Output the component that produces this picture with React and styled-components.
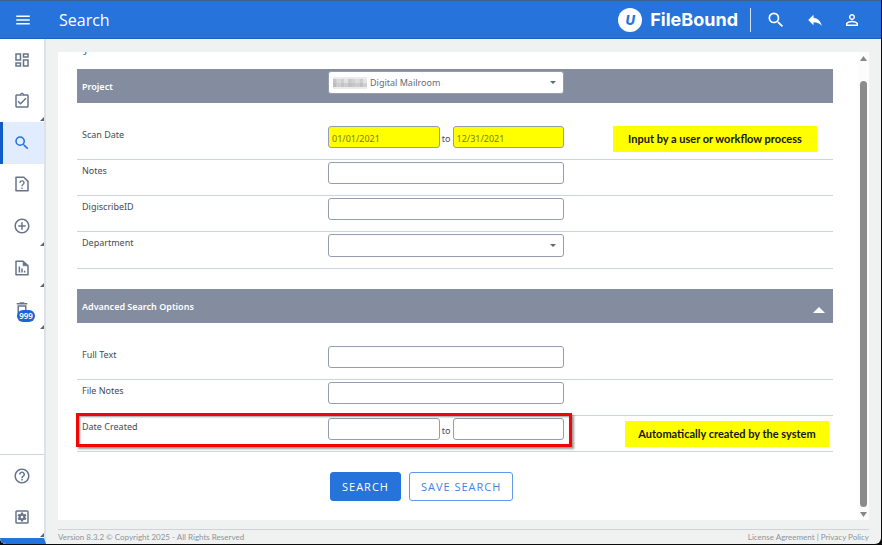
import React from 'react';
import styled, { createGlobalStyle } from 'styled-components';
import {
  MdMenu,
  MdSearch,
  MdReply,
  MdOutlineDashboard,
  MdOutlineAssignmentTurnedIn,
  MdAddCircleOutline,
  MdDeleteOutline,
  MdHelpOutline,
  MdOutlineSettingsApplications,
  MdPersonOutline,
} from 'react-icons/md';

const GlobalStyle = createGlobalStyle`
  * {
    box-sizing: border-box;
  }
  body {
    margin: 0;
    background: #0b0b0b;
    font-family: 'Noto Sans', 'Open Sans', sans-serif;
    font-size: 9px;
    color: #454b54;
  }
  button, input, select {
    font-family: inherit;
  }
`

const Window = styled.div`
  display: flex;
  flex-direction: column;
  min-height: calc(100vh - 1px);
  margin: 0 1px 1px 0;
  background: #f0f2f1;
  border-radius: 0 0 6px 6px;
  overflow: hidden;
`

const TopBar = styled.header`
  display: flex;
  align-items: center;
  height: 39px;
  padding: 0 20px 0 14px;
  color: #fff;
  background: #2573db;
  border-top: 1px solid #3b618f;
  border-bottom: 1px solid #1b61c2;
`

const BarButton = styled.button`
  display: flex;
  padding: 0;
  border: 0;
  background: none;
  color: inherit;
  font-size: ${p => p.$size || 18}px;
  margin-left: ${p => p.$gap || 0}px;
`

const Title = styled.h1`
  margin: 0 auto 0 27px;
  font-family: 'Open Sans', sans-serif;
  font-size: 16px;
  font-weight: 400;
`

const Brand = styled.div`
  display: flex;
  align-items: center;
  gap: 8px;
  padding-right: 12px;
  border-right: 1px solid #d5e3f8;
  font: 700 18px/24px Inter, sans-serif;
`

const BrandMark = styled.span`
  display: flex;
  align-items: center;
  justify-content: center;
  width: 24px;
  height: 24px;
  border-radius: 50%;
  background: #fff;
  color: #2573db;
  font: italic 800 13px/20px Inter, sans-serif;
`

const Body = styled.div`
  display: flex;
  flex: 1;
`

const Sidebar = styled.nav`
  display: flex;
  flex-direction: column;
  justify-content: space-between;
  width: 46px;
  background: #fff;
  border-right: 2px solid #dde1e8;
  border-bottom: 6px solid #2573db;
`

const NavGroup = styled.div`
  display: grid;
  grid-auto-rows: 1fr;
  min-height: ${p => p.$height}px;
  border-top: ${p => (p.$ruled ? '1px solid #cdd3dc' : '0')};
`

const NavButton = styled.button`
  position: relative;
  display: flex;
  align-items: center;
  justify-content: center;
  padding: 0;
  border: 0;
  border-left: 3px solid ${p => (p.$active ? '#0f5cc8' : 'transparent')};
  padding-right: 3px;
  background: ${p => (p.$active ? '#e1edfe' : 'none')};
  color: ${p => (p.$active ? '#2573db' : '#66748a')};
  font-size: 18px;
`

const Corner = styled.span`
  position: absolute;
  right: 0;
  bottom: 1px;
  border-style: solid;
  border-width: 0 0 4px 4px;
  border-color: transparent transparent #5c6370 transparent;
`

const Badge = styled.span`
  position: absolute;
  left: 14px;
  top: 22px;
  min-width: 18px;
  padding: 0 2px;
  border-radius: 6px;
  background: #1966d6;
  color: #fff;
  font-size: 8px;
  font-weight: 600;
  line-height: 12px;
`

const Main = styled.main`
  display: flex;
  flex: 1;
  flex-direction: column;
  padding: 13px 12px 0;
`

const Panel = styled.section`
  display: flex;
  flex: 1;
  background: #fff;
`

const Form = styled.form`
  flex: 1;
  padding: 0 25px 19px 19px;
`

const ClippedHeading = styled.div`
  height: 3px;
  margin-bottom: 14px;
  padding-left: 7px;
  overflow: hidden;
  display: flex;
  align-items: flex-end;
  color: #2573db;
  font: 13px/15px 'Open Sans', sans-serif;
`

const SectionHead = styled.div`
  display: grid;
  grid-template-columns: 251px 236px 1fr;
  height: 34px;
  align-items: center;
  background: #838d9f;
  color: #fff;
`

const SectionTitle = styled.label`
  padding-left: 5px;
  font-weight: 600;
`

const Collapse = styled.button`
  justify-self: end;
  align-self: end;
  display: flex;
  margin: 0 8px 10px 0;
  padding: 0;
  border: 0;
  background: none;
  color: #fff;
`

const Fields = styled.div`
  padding: 21px 0 20px;
`

const Row = styled.div`
  position: relative;
  display: grid;
  grid-template-columns: 251px 236px 1fr;
  align-items: start;
  min-height: ${p => (p.$tall ? 37 : 36)}px;
  padding-top: 2px;
  border-bottom: 1px solid #cfd4da;
`

const Label = styled.label`
  padding: 1px 0 0 5px;
  line-height: 16px;
`

const Input = styled.input`
  width: 100%;
  height: 22px;
  min-width: 0;
  padding: 3px 3px 0;
  border: 1px solid #949eae;
  border-radius: 3px;
  background: ${p => (p.$marked ? '#ffff00' : '#fff')};
  color: ${p => (p.$marked ? '#7d7c10' : '#555')};
  font-size: 9px;
`

const Range = styled.div`
  display: grid;
  grid-template-columns: 1fr 13px 1fr;
  align-items: center;
  text-align: center;

  span {
    padding-top: 3px;
  }
`

const SelectBox = styled.div`
  position: relative;
  align-self: start;
  margin-top: ${p => p.$top || 0}px;
  color: #5a6880;

  select {
    appearance: none;
    width: 100%;
    height: 23px;
    padding: 0 20px 0 ${p => p.$indent || 4}px;
    border: 1px solid #949eae;
    border-radius: 3px;
    background: #fff;
    color: #666b73;
    font-size: 9px;
  }
  .caret {
    position: absolute;
    right: 8px;
    top: 10px;
  }
  .redacted {
    position: absolute;
    left: 5px;
    top: 6px;
  }
`

const Note = styled.div`
  justify-self: end;
  min-width: 204px;
  margin: ${p => (p.$raised ? '0 16px 0 0' : '3px 4px 0 0')};
  background: #ffff00;
  color: #16160a;
  font: 700 11px/26px Lato, sans-serif;
  text-align: center;
`

const Highlight = styled.div`
  position: absolute;
  grid-column: 1 / 3;
  inset: -3px -8px 4px -1px;
  border: 3px solid #f20505;
  box-shadow: 2px 2px 2px rgba(0, 0, 0, 0.4), inset 1px 1px 2px rgba(0, 0, 0, 0.4);
  pointer-events: none;
`

const Actions = styled.div`
  display: flex;
  gap: 8px;
  padding-left: 253px;
`

const Action = styled.button`
  height: 29px;
  padding: 0 11px;
  border: 1px solid ${p => (p.$primary ? '#2573db' : '#5f9aea')};
  border-radius: 3px;
  background: ${p => (p.$primary ? '#2573db' : '#fff')};
  color: ${p => (p.$primary ? '#fff' : '#3f84e2')};
  font: 500 11px/16px 'Open Sans', sans-serif;
  letter-spacing: 1px;
`

const Scrollbar = styled.div`
  display: flex;
  flex-direction: column;
  align-items: center;
  gap: 20px;
  width: 11px;
  padding: 4px 0 3px;
  background: #fcfcfc;
  color: #878787;
`

const Thumb = styled.div`
  flex: 1;
  width: 7px;
  margin-bottom: -15px;
  border-radius: 4px;
  background: #8b8b8b;
`

const Footer = styled.footer`
  display: flex;
  justify-content: space-between;
  margin-top: 9px;
  border-top: 1px solid #cfd2d4;
  color: #8d949b;
  font: 8px/14px Lato, sans-serif;

  a {
    color: inherit;
    text-decoration: none;
  }
`

const Triangle = ({ w, h, down, className }) => (
  <svg className={className} width={w} height={h} viewBox="0 0 10 10" preserveAspectRatio="none" fill="currentColor">
    <path d={down ? 'M0 0h10L5 10z' : 'M5 0l5 10H0z'} />
  </svg>
)

const FileQuestionIcon = () => (
  <svg width="18" height="18" viewBox="0 0 24 24" fill="none" stroke="currentColor" strokeWidth="2">
    <path d="M4 3h10.500L20 8.500V21H4z" strokeLinejoin="round" />
    <path d="M9.300 10.500c0-3.800 5.400-3.500 5.400-.2 0 2.100-2.700 2.100-2.700 4.700M12 16.500v2" strokeWidth="1.700" />
  </svg>
)

const FileChartIcon = () => (
  <svg width="18" height="18" viewBox="0 0 24 24" fill="none" stroke="currentColor" strokeWidth="2">
    <path d="M4 3h9.500L20 9v12H4z" strokeLinejoin="round" />
    <path d="M13.500 3v6H20z" fill="currentColor" strokeWidth="1" />
    <path d="M8.500 10v8M12 12.500V18M15.500 15.500V18" />
  </svg>
)

// blurred out company name in front of the project
const shades = [
  '#c4c4c4', '#d9d9d9', '#cfcfcf', '#e2e2e2', '#c9c9c9', '#d2d2d2', '#dddddd', '#cccccc', '#e4e4e4',
  '#bdbdbd', '#cdcdcd', '#c2c2c2', '#cacaca', '#bfbfbf', '#c6c6c6', '#cbcbcb', '#c0c0c0', '#cfcfcf',
]

const Redacted = () => (
  <svg className="redacted" width="34" height="12" viewBox="0 0 36 12" preserveAspectRatio="none">
    <rect width="36" height="12" fill="#ececec" />
    {shades.map((fill, i) => (
      <rect key={i} x={(i % 9) * 4} y={i < 9 ? 2 : 6} width="4" height="4" fill={fill} />
    ))}
  </svg>
)

const navItems = [
  { name: 'Dashboard', icon: <MdOutlineDashboard /> },
  { name: 'Assignments', icon: <MdOutlineAssignmentTurnedIn />, corner: true },
  { name: 'Search', icon: <MdSearch />, active: true },
  { name: 'Requests', icon: <FileQuestionIcon /> },
  { name: 'Add', icon: <MdAddCircleOutline />, corner: true },
  { name: 'Reports', icon: <FileChartIcon />, corner: true },
  { name: 'Deleted', icon: <MdDeleteOutline />, corner: true, badge: '999' },
]

const helpItems = [
  { name: 'Help', icon: <MdHelpOutline /> },
  { name: 'Settings', icon: <MdOutlineSettingsApplications />, corner: true },
]

const NavItem = ({ item }) => (
  <NavButton type="button" aria-label={item.name} $active={item.active}>
    {item.icon}
    {item.badge && <Badge>{item.badge}</Badge>}
    {item.corner && <Corner />}
  </NavButton>
)

const TextRow = ({ id, label }) => (
  <Row>
    <Label htmlFor={id}>{label}</Label>
    <Input id={id} type="text" />
  </Row>
)

const DateRow = ({ id, label, from, to, marked, children }) => (
  <Row>
    <Label htmlFor={id}>{label}</Label>
    <Range>
      <Input id={id} type="text" defaultValue={from} $marked={marked} />
      <span>to</span>
      <Input type="text" aria-label={`${label} end`} defaultValue={to} $marked={marked} />
    </Range>
    {children}
  </Row>
)

export default function App() {
  return (
    <Window>
      <GlobalStyle />
      <TopBar>
        <BarButton type="button" aria-label="Menu"><MdMenu /></BarButton>
        <Title>Search</Title>
        <Brand>
          <BrandMark>U</BrandMark>
          FileBound
        </Brand>
        <BarButton type="button" aria-label="Find" $size={20} $gap={15}><MdSearch /></BarButton>
        <BarButton type="button" aria-label="Back" $gap={20}><MdReply /></BarButton>
        <BarButton type="button" aria-label="Account" $gap={19}><MdPersonOutline /></BarButton>
      </TopBar>
      <Body>
        <Sidebar>
          <NavGroup $height={291}>
            {navItems.map(item => <NavItem key={item.name} item={item} />)}
          </NavGroup>
          <NavGroup $height={84} $ruled>
            {helpItems.map(item => <NavItem key={item.name} item={item} />)}
          </NavGroup>
        </Sidebar>
        <Main>
          <Panel>
            <Form onSubmit={(e) => e.preventDefault()}>
              <ClippedHeading>j</ClippedHeading>
              <SectionHead>
                <SectionTitle htmlFor="project">Project</SectionTitle>
                <SelectBox $top={2} $indent={41}>
                  <select id="project">
                    <option>Digital Mailroom</option>
                  </select>
                  <Redacted />
                  <Triangle className="caret" w="6" h="3" down />
                </SelectBox>
              </SectionHead>
              <Fields>
                <DateRow id="scan" label="Scan Date" from="01/01/2021" to="12/31/2021" marked>
                  <Note $raised>Input by a user or workflow process</Note>
                </DateRow>
                <TextRow id="notes" label="Notes" />
                <TextRow id="digiscribe" label="DigiscribeID" />
                <Row $tall>
                  <Label htmlFor="department">Department</Label>
                  <SelectBox>
                    <select id="department" />
                    <Triangle className="caret" w="6" h="3" down />
                  </SelectBox>
                </Row>
              </Fields>
              <SectionHead>
                <SectionTitle as="span">Advanced Search Options</SectionTitle>
                <span />
                <Collapse type="button" aria-label="Collapse"><Triangle w="12" h="6" /></Collapse>
              </SectionHead>
              <Fields>
                <TextRow id="fulltext" label="Full Text" />
                <TextRow id="filenotes" label="File Notes" />
                <DateRow id="created" label="Date Created">
                  <Note>Automatically created by the system</Note>
                  <Highlight />
                </DateRow>
              </Fields>
              <Actions>
                <Action type="submit" $primary>SEARCH</Action>
                <Action type="button">SAVE SEARCH</Action>
              </Actions>
            </Form>
            <Scrollbar>
              <Triangle w="7" h="5" />
              <Thumb />
              <Triangle w="7" h="5" down />
            </Scrollbar>
          </Panel>
          <Footer>
            <span>Version 8.3.2 © Copyright 2025 - All Rights Reserved</span>
            <span>
              <a href="#license">License Agreement</a> | <a href="#privacy">Privacy Policy</a>
            </span>
          </Footer>
        </Main>
      </Body>
    </Window>
  )
}
